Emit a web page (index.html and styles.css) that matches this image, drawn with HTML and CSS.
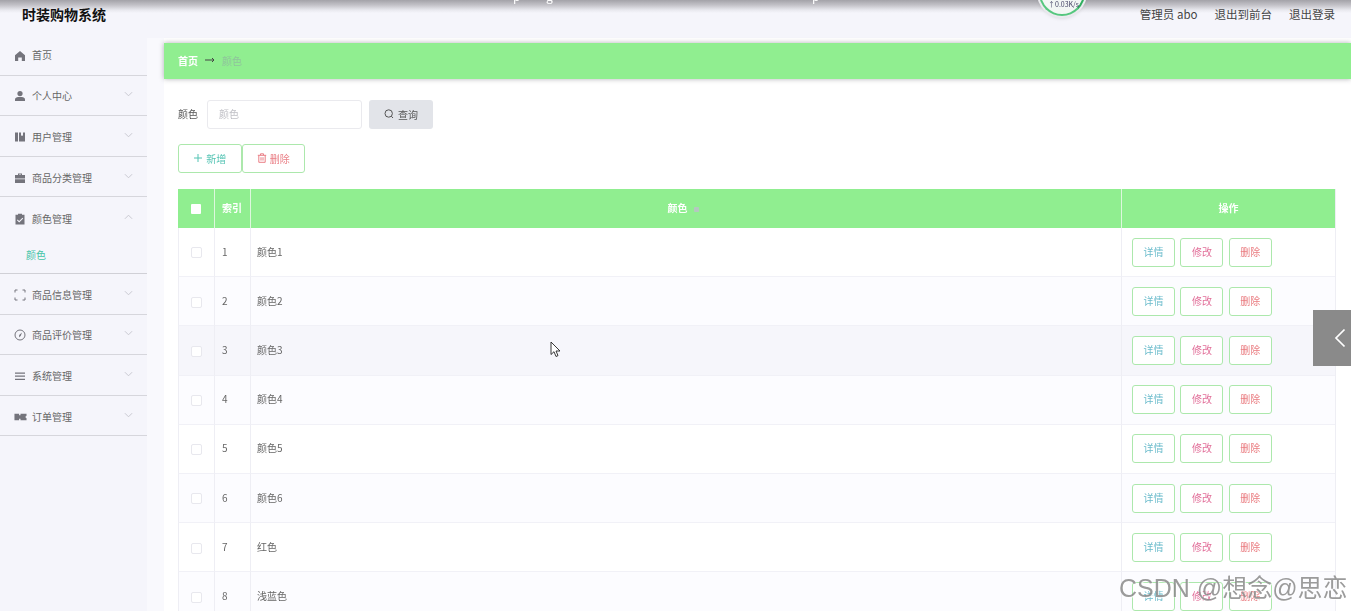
FILE: index.html
```html
<!DOCTYPE html>
<html lang="zh">
<head>
<meta charset="utf-8">
<title>时装购物系统</title>
<link rel="stylesheet" href="styles.css">
</head>
<body>
<div class="app">
  <header class="topbar">
    <h1 class="brand">时装购物系统</h1>
    <nav class="usernav">
      <span>管理员 abo</span>
      <span>退出到前台</span>
      <span>退出登录</span>
    </nav>
  </header>
  <span class="frag f1">p</span>
  <span class="frag f2">g</span>
  <span class="frag f3">p</span>
  <div class="netwidget"><span class="nettext">↑0.03K/s</span></div>
  <div class="body">
    <aside class="sidebar">
      <div class="mitem first">
        <svg class="micon" viewBox="0 0 12 12"><path d="M6 1 1 5.2V11h3.2V7.6h3.6V11H11V5.2z"/></svg>
        <span>首页</span>
      </div>
      <div class="mitem">
        <svg class="micon" viewBox="0 0 12 12"><circle cx="6" cy="3.6" r="2.6"/><path d="M1 11V9.2C1 7.6 3 7 6 7s5 .6 5 2.2V11z"/></svg>
        <span>个人中心</span>
        <svg class="chev" viewBox="0 0 10 6"><path d="M1 1l4 4 4-4"/></svg>
      </div>
      <div class="mitem">
        <svg class="micon" viewBox="0 0 12 12"><path d="M1 1.500h3v9H1zM5 1.500h2V5l1-.8 1 .8V1.500h2v9H5z"/></svg>
        <span>用户管理</span>
        <svg class="chev" viewBox="0 0 10 6"><path d="M1 1l4 4 4-4"/></svg>
      </div>
      <div class="mitem">
        <svg class="micon" viewBox="0 0 12 12"><path d="M4 3V1.500h4V3h3v3.400H1V3zM5 2.400V3h2v-.6zM1 7.200h10V11H1z"/></svg>
        <span>商品分类管理</span>
        <svg class="chev" viewBox="0 0 10 6"><path d="M1 1l4 4 4-4"/></svg>
      </div>
      <div class="mitem open">
        <svg class="micon" viewBox="0 0 12 12"><path d="M4 .8h4v1h2.500V11.500h-9V1.800H4zM3.600 6.600l-.7.7L5.200 9.500l4-4-.7-.7-3.300 3.300z" fill-rule="evenodd"/></svg>
        <span>颜色管理</span>
        <svg class="chev" viewBox="0 0 10 6"><path d="M1 5l4-4 4 4"/></svg>
      </div>
      <div class="subitem">颜色</div>
      <div class="mitem">
        <svg class="micon line" viewBox="0 0 12 12"><path d="M3.500 1H1v2.500M8.500 1H11v2.500M3.500 11H1V8.500M8.500 11H11V8.500"/></svg>
        <span>商品信息管理</span>
        <svg class="chev" viewBox="0 0 10 6"><path d="M1 1l4 4 4-4"/></svg>
      </div>
      <div class="mitem">
        <svg class="micon line" viewBox="0 0 12 12"><circle cx="6" cy="6" r="5"/><path class="fillpath" d="M8 3.600 6.800 6.800 5 8.400l.2-2.400z"/></svg>
        <span>商品评价管理</span>
        <svg class="chev" viewBox="0 0 10 6"><path d="M1 1l4 4 4-4"/></svg>
      </div>
      <div class="mitem">
        <svg class="micon" viewBox="0 0 12 12"><path d="M1 2.500h10v1.200H1zM1 5.600h10v1.200H1zM1 8.700h10v1.200H1z"/></svg>
        <span>系统管理</span>
        <svg class="chev" viewBox="0 0 10 6"><path d="M1 1l4 4 4-4"/></svg>
      </div>
      <div class="mitem">
        <svg class="micon wide" viewBox="0 0 14 12"><path d="M.5 2.500H5.500V4h1.500V2.500h6.500v2.200L12 6l1.500 1.300V9.500H7V8H5.500v1.500H.5z"/></svg>
        <span>订单管理</span>
        <svg class="chev" viewBox="0 0 10 6"><path d="M1 1l4 4 4-4"/></svg>
      </div>
    </aside>
    <main class="main">
      <div class="crumb">
        <span class="crumb-home">首页</span>
        <svg class="crumb-arrow" viewBox="0 0 10 6"><path d="M0 3h9M7 1l2 2-2 2"/></svg>
        <span class="crumb-cur">颜色</span>
      </div>
      <section class="panel">
        <form class="search">
          <span class="search-label">颜色</span>
          <span class="search-input">颜色</span>
          <span class="search-btn">
            <svg class="search-icon" viewBox="0 0 10 10"><circle cx="4.700" cy="4.500" r="3.700"/><path d="M7.300 7.200 9 9"/></svg>
            查询
          </span>
        </form>
        <div class="actions">
          <span class="act add">
            <svg class="act-icon" viewBox="0 0 10 10"><path d="M5 1v8M1 5h8"/></svg>
            新增
          </span>
          <span class="act del">
            <svg class="act-icon" viewBox="0 0 10 10"><path d="M.8 2.300h8.400M3.500 2.200V.8h3v1.400M1.800 2.300v7h6.400v-7M4 4.200v3.400M6 4.200v3.400"/></svg>
            删除
          </span>
        </div>
        <table class="grid">
          <colgroup><col class="c1"><col class="c2"><col><col class="c4"></colgroup>
          <thead>
            <tr>
              <th><i class="hcheck"></i></th>
              <th>索引</th>
              <th class="center">颜色<i class="sort"></i></th>
              <th class="center">操作</th>
            </tr>
          </thead>
          <tbody>
            <tr><td><i class="check"></i></td><td>1</td><td>颜色1</td><td class="ops"><span class="op info">详情</span><span class="op edit">修改</span><span class="op rm">删除</span></td></tr>
            <tr class="alt"><td><i class="check"></i></td><td>2</td><td>颜色2</td><td class="ops"><span class="op info">详情</span><span class="op edit">修改</span><span class="op rm">删除</span></td></tr>
            <tr class="hover"><td><i class="check"></i></td><td>3</td><td>颜色3</td><td class="ops"><span class="op info">详情</span><span class="op edit">修改</span><span class="op rm">删除</span></td></tr>
            <tr class="alt"><td><i class="check"></i></td><td>4</td><td>颜色4</td><td class="ops"><span class="op info">详情</span><span class="op edit">修改</span><span class="op rm">删除</span></td></tr>
            <tr><td><i class="check"></i></td><td>5</td><td>颜色5</td><td class="ops"><span class="op info">详情</span><span class="op edit">修改</span><span class="op rm">删除</span></td></tr>
            <tr class="alt"><td><i class="check"></i></td><td>6</td><td>颜色6</td><td class="ops"><span class="op info">详情</span><span class="op edit">修改</span><span class="op rm">删除</span></td></tr>
            <tr><td><i class="check"></i></td><td>7</td><td>红色</td><td class="ops"><span class="op info">详情</span><span class="op edit">修改</span><span class="op rm">删除</span></td></tr>
            <tr class="alt"><td><i class="check"></i></td><td>8</td><td>浅蓝色</td><td class="ops"><span class="op info">详情</span><span class="op edit">修改</span><span class="op rm">删除</span></td></tr>
          </tbody>
        </table>
      </section>
    </main>
  </div>
  <div class="handle"><svg viewBox="0 0 12 20"><path d="M10.500 1.500 2 10l8.500 8.500"/></svg></div>
  <svg class="cursor" viewBox="0 0 11 17"><path d="M1 1v12.500l3-2.800 2 4.800 2-.9-2-4.600h4z"/></svg>
  <div class="watermark">CSDN @想念@思恋</div>
</div>
</body>
</html>
```
FILE: styles.css
```css
* { box-sizing: border-box; }
html, body { margin: 0; height: 100%; overflow: hidden; }
body {
  font-family: "Noto Sans CJK SC", "Liberation Sans", sans-serif;
  font-size: 10px;
  color: #555;
  background: #f5f5fb;
}
.app {
  position: relative;
  width: 1351px;
  height: 611px;
  overflow: hidden;
  filter: blur(0.4px);
}
.topbar {
  height: 38px;
  display: flex;
  justify-content: space-between;
  padding: 0 16px 0 22px;
  background: linear-gradient(#a3a2a8 0, #c2c1c7 5px, #e8e8ee 10px, #f5f5fb 13px);
}
.brand {
  margin: 6px 0 0;
  font-size: 14px;
  line-height: 17px;
  font-weight: 700;
  color: #111;
}
.usernav {
  display: flex;
  gap: 17px;
  margin-top: 6px;
  font-size: 11.500px;
  line-height: 16px;
  color: #444;
}
.frag {
  position: absolute;
  top: -10px;
  font-size: 12px;
  line-height: 12px;
  color: #fff;
}
.f1 { left: 513px; }
.f2 { left: 546px; }
.f3 { left: 812px; }
.netwidget {
  position: absolute;
  left: 1039px;
  top: -30px;
  width: 46px;
  height: 46px;
  border-radius: 50%;
  border: 2px solid #55c77e;
  border-right-color: #2fae5e;
  background: #f2f7f4;
  box-shadow: 0 0 0 2px #eaeaee, 0 2px 4px rgba(0,0,0,.15);
}
.nettext {
  position: absolute;
  left: 7px;
  bottom: 6px;
  font-size: 7px;
  line-height: 8px;
  color: #446;
  white-space: nowrap;
}
.body {
  display: flex;
  height: 573px;
}
.sidebar {
  flex: 0 0 147px;
  background: #f5f5fb;
}
.mitem {
  height: 40.650px;
  padding: 2px 0 0 14px;
  display: flex;
  align-items: center;
  gap: 6px;
  border-bottom: 1px solid #d6d6dc;
  color: #666;
  line-height: 14px;
}
.mitem.first { height: 37.550px; padding: 0 0 2px 14px; }
.first .micon { margin-top: 2px; }
.mitem.open { border-bottom: 0; }
.micon {
  flex: 0 0 12px;
  width: 12px;
  height: 12px;
  fill: #74747c;
}
.micon.wide { flex-basis: 13px; width: 13px; margin-right: -1px; }
.micon.line { fill: none; stroke: #74747c; stroke-width: 1; }
.micon .fillpath { fill: #74747c; stroke: none; }
.chev {
  width: 9px;
  height: 6px;
  margin-left: auto;
  margin-right: 14px;
  margin-top: -4px;
  fill: none;
  stroke: #c4c4cc;
  stroke-width: 1;
}
.subitem {
  height: 35.800px;
  padding: 10px 0 0 26px;
  line-height: 14px;
  color: #45c4a8;
  border-bottom: 1px solid #d0d0d6;
}
.main {
  flex: 1;
  min-width: 0;
  margin-left: 17px;
  background: #fff;
  position: relative;
  box-shadow: -17px 0 0 #f9f9fd;
}
.crumb {
  height: 36px;
  margin-top: 5px;
  padding: 0 0 2px 14px;
  display: flex;
  align-items: center;
  gap: 7px;
  background: #90ee90;
  box-shadow: 0 0 5px rgba(60,60,70,.4);
  color: #fff;
  font-weight: 700;
  position: relative;
}
.crumb-arrow { width: 10px; height: 6px; fill: none; stroke: #444; stroke-width: 1; }
.crumb-cur { color: #8fc29c; font-weight: 400; }
.panel { padding: 21px 15px 0 14px; }
.search {
  display: flex;
  align-items: center;
  height: 29px;
}
.search-label { width: 29px; color: #555; padding-bottom: 2px; }
.search-input {
  width: 155px;
  height: 29px;
  padding: 0 11px;
  margin-right: 7px;
  border: 1px solid #eaeaee;
  border-radius: 3px;
  line-height: 25px;
  color: #c0c0c6;
  background: #fff;
}
.search-btn {
  width: 64px;
  height: 29px;
  padding-bottom: 1px;
  display: flex;
  align-items: center;
  justify-content: center;
  gap: 4px;
  background: #e2e4e9;
  border-radius: 3px;
  color: #555;
}
.search-icon { width: 10px; height: 10px; fill: none; stroke: #555; stroke-width: 1; }
.actions {
  display: flex;
  height: 29px;
  margin-top: 15px;
}
.act {
  width: 63.500px;
  height: 29px;
  padding-bottom: 1px;
  display: flex;
  align-items: center;
  justify-content: center;
  gap: 3px;
  border: 1px solid #ace8ac;
  border-radius: 3px;
  background: #fff;
}
.act-icon { width: 10px; height: 10px; fill: none; stroke: currentColor; stroke-width: 1; }
.add { color: #55c4b4; }
.del { color: #ea7f86; }
.grid {
  width: 1158px;
  margin-top: 16px;
  border-collapse: separate;
  border-spacing: 0;
  table-layout: fixed;
  border-right: 1px solid #eeeef4;
}
.c1 { width: 37px; }
.c2 { width: 36px; }
.c4 { width: 213px; }
.grid th {
  height: 39px;
  padding: 0 7px 3px;
  background: #90ee90;
  color: #fff;
  font-weight: 700;
  text-align: left;
  white-space: nowrap;
  border-right: 1px solid #ddf7dd;
}
.grid th:last-child { border-right: 0; }
.grid th.center { text-align: center; }
.grid th:first-child { text-align: center; padding: 0 0 3px; }
.grid td {
  height: 49.200px;
  padding: 0 6px 2px;
  border-bottom: 1px solid #f1f1f7;
  border-right: 1px solid #eeeef4;
  color: #666;
}
.grid td:first-child { padding: 0 0 2px; text-align: center; border-left: 1px solid #eeeef4; }
.grid td:nth-child(2) { padding-left: 7px; }
.grid td:last-child { border-right: 0; }
.grid td.ops { padding: 0 0 0 10px; }
.alt { background: #fcfcff; }
.hover { background: #f6f6fb; }
.hcheck {
  display: inline-block;
  width: 10px;
  height: 10px;
  background: #fff;
  border-radius: 1px;
  vertical-align: middle;
}
.check {
  display: inline-block;
  width: 11px;
  height: 11px;
  border: 1px solid #e8e8ee;
  border-radius: 2px;
  background: #fff;
  vertical-align: middle;
}
.sort {
  display: inline-block;
  width: 5px;
  height: 5px;
  margin: 0 6px 0 6px;
  background: #b4c8c0;
  border-radius: 1px;
}
.op {
  display: inline-block;
  width: 43px;
  height: 29px;
  margin-right: 5.400px;
  border: 1px solid #ace8ac;
  border-radius: 3px;
  background: #fff;
  text-align: center;
  line-height: 25px;
  vertical-align: middle;
}
.op.info { color: #6cbccc; }
.op.edit { color: #e2709a; }
.op.rm { color: #ea7c80; }
.handle {
  position: absolute;
  left: 1313px;
  top: 310px;
  width: 38px;
  height: 56px;
  background: #8a8a8a;
  display: flex;
  align-items: center;
  justify-content: flex-end;
  padding-right: 5px;
}
.handle svg { width: 12px; height: 20px; fill: none; stroke: #fff; stroke-width: 1.700; }
.cursor {
  position: absolute;
  left: 550px;
  top: 341px;
  width: 11px;
  height: 17px;
  fill: #fff;
  stroke: #222;
  stroke-width: .9;
}
.watermark {
  position: absolute;
  left: 1119px;
  top: 573px;
  font-family: "Liberation Sans", "Noto Sans CJK SC", sans-serif;
  font-size: 25px;
  line-height: 30px;
  color: rgba(130,130,130,.8);
  text-shadow: 1px 1px 1px rgba(255,255,255,.8);
  white-space: nowrap;
}
```
